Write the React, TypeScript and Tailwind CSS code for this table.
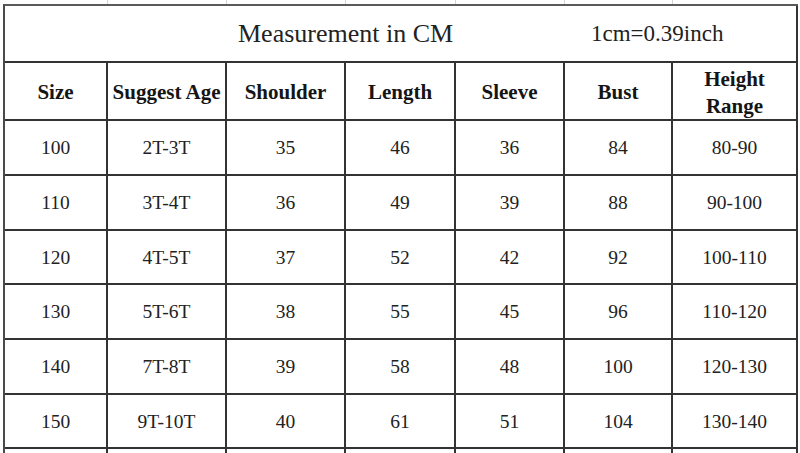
const widths = [
  'w-[103px]',
  'w-[119px]',
  'w-[119px]',
  'w-[110px]',
  'w-[109px]',
  'w-[108px]',
  'w-[125px]',
];

const headers = ['Size', 'Suggest Age', 'Shoulder', 'Length', 'Sleeve', 'Bust', 'Height Range'];

const rows = [
  { h: 'h-[55px]', cells: ['100', '2T-3T', '35', '46', '36', '84', '80-90'] },
  { h: 'h-[55px]', cells: ['110', '3T-4T', '36', '49', '39', '88', '90-100'] },
  { h: 'h-[54px]', cells: ['120', '4T-5T', '37', '52', '42', '92', '100-110'] },
  { h: 'h-[55px]', cells: ['130', '5T-6T', '38', '55', '45', '96', '110-120'] },
  { h: 'h-[55px]', cells: ['140', '7T-8T', '39', '58', '48', '100', '120-130'] },
  { h: 'h-[54px]', cells: ['150', '9T-10T', '40', '61', '51', '104', '130-140'] },
  { h: 'h-[55px]', cells: ['', '', '', '', '', '', ''] },
];

const serif = "font-['Liberation_Serif','Times_New_Roman',serif]";

export default function App() {
  return (
    <div className={`w-[800px] h-[453px] overflow-hidden bg-white ${serif}`}>
      {/* faint lines of the row above, cut off */}
      <div className="flex h-[4px] pl-[5px]">
        {widths.map((w, i) => (
          <div key={i} className={`${w} h-full ${i < 6 ? 'border-r border-[#d4d4d4]' : ''}`} />
        ))}
      </div>

      <div className="ml-[3px] w-[795px] border-l-2 border-t-2 border-l-[#4a4a4a] border-t-[#5a5a5a]">
        {/* title row */}
        <div className="flex h-[57px] items-center border-r-2 border-b-2 border-[#333] pl-[233px] text-[#222]">
          <span className="w-[353px] text-[26px] leading-none">Measurement in CM</span>
          <span className="text-[23px] leading-none">1cm=0.39inch</span>
        </div>

        {/* header row */}
        <div className="flex h-[58px]">
          {headers.map((t, i) => (
            <div
              key={t}
              className={`${widths[i]} flex items-center justify-center border-r-2 border-b-2 border-[#333] text-center text-[21px] font-bold text-[#151515] ${
                i === 6 ? 'px-7 pt-[3px] leading-[27px]' : 'pt-[2px] leading-none'
              }`}
            >
              {t}
            </div>
          ))}
        </div>

        {rows.map((r, ri) => (
          <div key={ri} className={`flex ${r.h}`}>
            {r.cells.map((c, ci) => (
              <div
                key={ci}
                className={`${widths[ci]} flex items-center justify-center border-r-2 border-b-2 border-[#333] pt-[1px] text-[19.5px] leading-none text-[#222]`}
              >
                {c}
              </div>
            ))}
          </div>
        ))}
      </div>
    </div>
  );
}
